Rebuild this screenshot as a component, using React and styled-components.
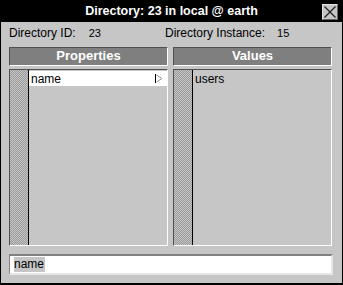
import React from "react";
import styled, { createGlobalStyle } from "styled-components";

const Global = createGlobalStyle`
  html, body { margin: 0; padding: 0; background: #c6c6c6; }
  * { box-sizing: border-box; }
`;

const Window = styled.div`
  width: 343px;
  height: 285px;
  background: #c6c6c6;
  border: 1px solid #000;
  border-bottom-width: 2px;
  display: flex;
  flex-direction: column;
  font-family: "Liberation Sans", Arial, sans-serif;
  color: #000;
`;

const TitleBar = styled.div`
  height: 21px;
  background: #000;
  display: grid;
  grid-template-columns: 20px 1fr 20px;
  align-items: center;
`;

const Title = styled.div`
  grid-column: 2;
  text-align: center;
  color: #fff;
  font-weight: bold;
  font-size: 12.5px;
  line-height: 21px;
`;

const CloseButton = styled.div`
  grid-column: 3;
  width: 16px;
  height: 16px;
  background: #c6c6c6;
  border: 1px solid #e0e0e0;
  border-right-color: #666;
  border-bottom-color: #666;
  display: flex;
  align-items: center;
  justify-content: center;
`;

const Body = styled.div`
  flex: 1;
  display: flex;
  flex-direction: column;
  padding: 4px 9px 0 8px;
`;

const InfoRow = styled.div`
  display: grid;
  grid-template-columns: 156px 1fr;
  font-size: 12px;
  line-height: 15px;
  height: 16px;
`;

const Info = styled.div`
  display: flex;
`;

const Label = styled.span``;

const Value = styled.span`
  margin-left: ${(p) => p.$gap}px;
  font-size: 11px;
`;

const Columns = styled.div`
  margin-top: 5px;
  display: grid;
  grid-template-columns: 159px 159px;
  column-gap: 5px;
`;

const Column = styled.div`
  display: flex;
  flex-direction: column;
`;

const Header = styled.div`
  height: 19px;
  background: #7f7f7f;
  border: 1px solid #505050;
  border-right-color: #fff;
  border-bottom-color: #fff;
  color: #fff;
  font-weight: bold;
  font-size: 13px;
  line-height: 16px;
  text-align: center;
`;

const Panel = styled.div`
  margin-top: 3px;
  height: 177px;
  border: 1px solid #505050;
  border-right-color: #fff;
  border-bottom-color: #fff;
  display: flex;
`;

const Stipple = styled.div`
  width: 19px;
  border-right: 1px solid #000;
  background-color: #c6c6c6;
  background-image: conic-gradient(#9a9a9a 25%, #c6c6c6 0 50%, #9a9a9a 0 75%, #c6c6c6 0);
  background-size: 2px 2px;
`;

const List = styled.div`
  flex: 1;
  padding-top: 1px;
`;

const Row = styled.div`
  height: 15px;
  background: ${(p) => (p.$selected ? "#fff" : "transparent")};
  display: flex;
  align-items: center;
  justify-content: space-between;
  padding: 0 4px 0 2px;
  font-size: 12px;
`;

const InputField = styled.div`
  margin-top: 8px;
  height: 21px;
  background: #fff;
  border: 1px solid #808080;
  border-top-width: 2px;
  border-right: 2px solid #e6e6e6;
  border-bottom: 2px solid #e6e6e6;
  display: flex;
  align-items: center;
  padding-left: 4px;
  font-size: 12px;
`;

const Selected = styled.span`
  background: #c6c6c6;
  line-height: 15px;
  padding-right: 1px;
`;

const Flag = () => (
  <svg width="8" height="9" viewBox="0 0 8 9">
    <line x1="0.5" y1="0" x2="0.5" y2="9" stroke="#000" />
    <path d="M1.5 1 L7 4.5 L1.5 8" fill="none" stroke="#999" />
  </svg>
);

const CloseX = () => (
  <svg width="14" height="14" viewBox="0 0 14 14">
    <path d="M1.5 1.5 L12.5 12.5 M12.5 1.5 L1.5 12.5" stroke="#222" strokeWidth="1.3" />
  </svg>
);

export default function App() {
  return (
    <>
      <Global />
      <Window>
        <TitleBar>
          <Title>Directory: 23 in local @ earth</Title>
          <CloseButton>
            <CloseX />
          </CloseButton>
        </TitleBar>
        <Body>
          <InfoRow>
            <Info>
              <Label>Directory ID:</Label>
              <Value $gap={13}>23</Value>
            </Info>
            <Info>
              <Label>Directory Instance:</Label>
              <Value $gap={12}>15</Value>
            </Info>
          </InfoRow>
          <Columns>
            <Column>
              <Header>Properties</Header>
              <Panel>
                <Stipple />
                <List>
                  <Row $selected>
                    <span>name</span>
                    <Flag />
                  </Row>
                </List>
              </Panel>
            </Column>
            <Column>
              <Header>Values</Header>
              <Panel>
                <Stipple />
                <List>
                  <Row>
                    <span>users</span>
                  </Row>
                </List>
              </Panel>
            </Column>
          </Columns>
          <InputField>
            <Selected>name</Selected>
          </InputField>
        </Body>
      </Window>
    </>
  );
}
